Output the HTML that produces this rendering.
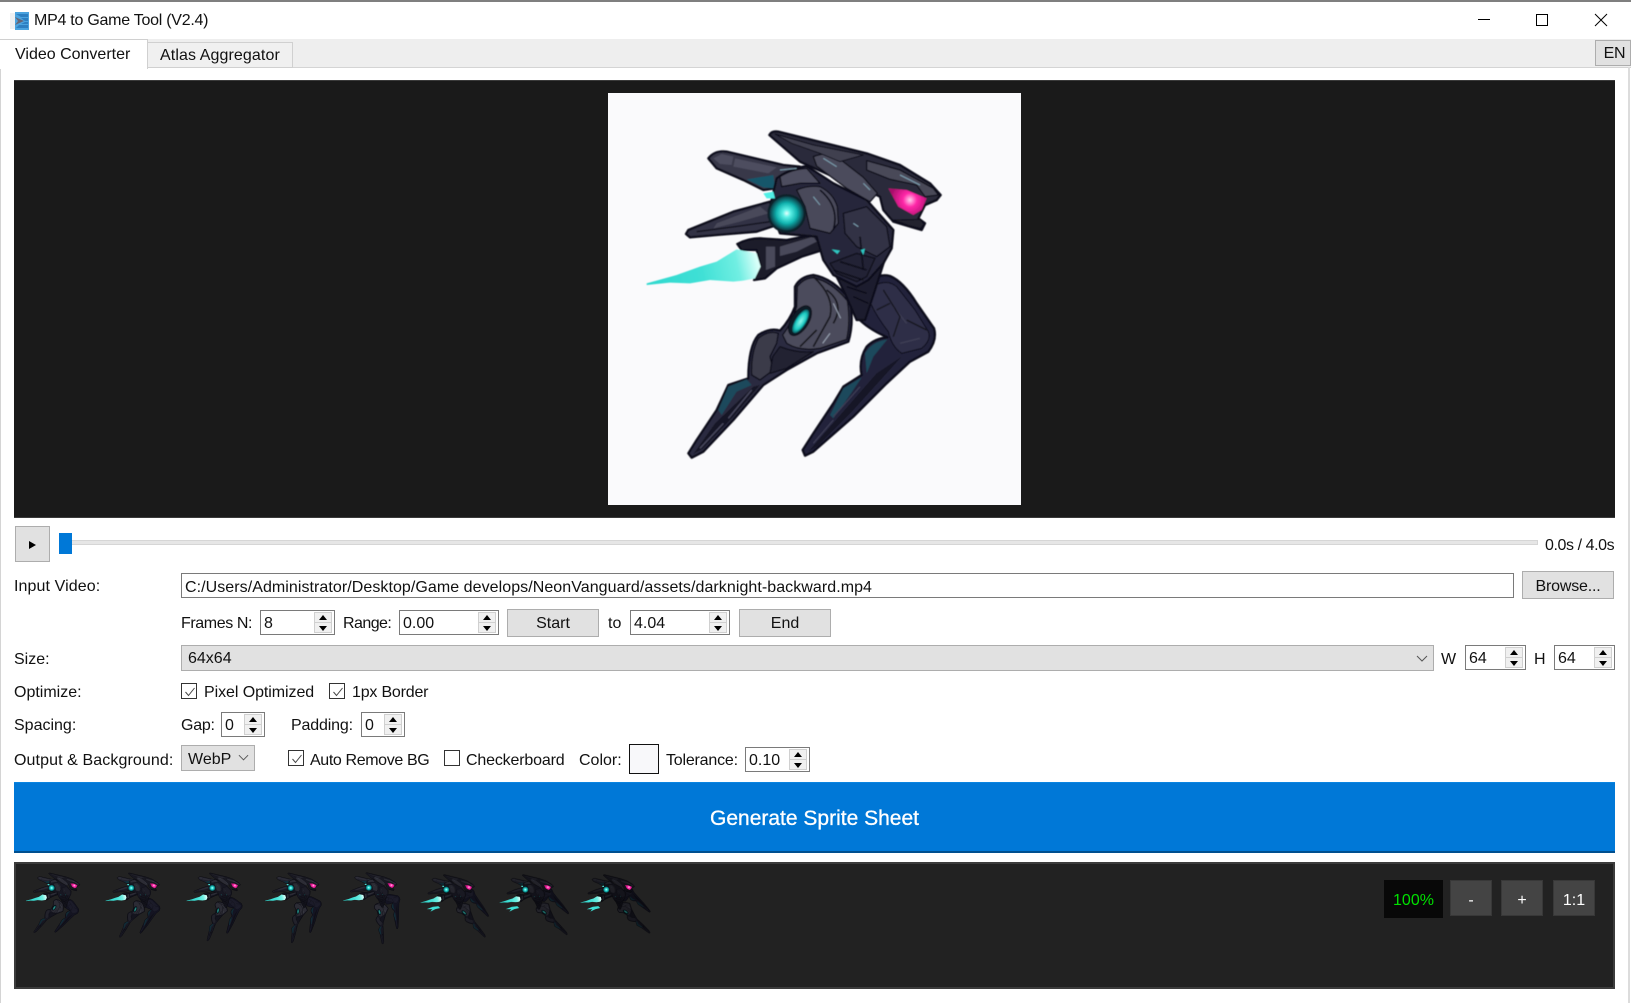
<!DOCTYPE html>
<html><head><meta charset="utf-8"><title>MP4 to Game Tool (V2.4)</title>
<style>
html,body{margin:0;padding:0;background:#fff}
body{width:1631px;height:1003px;position:relative;overflow:hidden;font-family:"Liberation Sans",sans-serif;font-size:16px;color:#111}
div,span,i,b{position:absolute;box-sizing:border-box;display:block;font-style:normal;font-weight:normal}
.t{height:22px;line-height:22px;white-space:nowrap}
.b{background:#e1e1e1;border:1px solid #adadad;text-align:center;white-space:nowrap}
.ed{background:#fff;border:1px solid #7a7a7a;white-space:nowrap;padding-left:3px;line-height:27px}
.spin{background:#fff;border:1px solid #7a7a7a;height:25px;line-height:26px;padding-left:3px;white-space:nowrap}
.spin i{right:2px;width:18px;height:11px;background:#f0f0f0;border:1px solid #d0d0d0}
.spin .u{top:1px}.spin .d{top:11px}
.spin i:after{content:"";position:absolute;left:4px;width:0;height:0;border-left:4px solid transparent;border-right:4px solid transparent}
.spin .u:after{top:2px;border-bottom:5px solid #000}
.spin .d:after{top:3px;border-top:5px solid #000}
.cb{width:16px;height:16px;background:#fff;border:1px solid #333}
.cb svg{position:absolute;left:1px;top:1px}
.zb{background:#444;border:1px solid #383838;color:#fff;text-align:center;line-height:40px;height:36px;width:42px;top:880px}
</style></head>
<body>
<div style="left:0;top:0;width:1631px;height:2px;background:#7f7f7f"></div>

<svg style="position:absolute;left:10px;top:12px" width="20" height="18" viewBox="0 0 20 18">
<rect x="0" y="1" width="6" height="16" fill="#eef0f2"/><rect x="5" y="0" width="14" height="18" fill="#4aa3df"/>
<path d="M6 2 L18 2 L18 5 L11 5Z M11 6 L18 6 L18 9 L15 9Z M15 10 L18 10 L18 12 L11 12Z M9 13 L18 13 L18 16 L6 16Z" fill="#2d7fc1"/>
<path d="M5 5 L14 9 L5 13 L8 9Z" fill="#667"/></svg>
<div class="t" style="left:34px;top:10px;letter-spacing:-.26px">MP4 to Game Tool (V2.4)</div>

<svg style="position:absolute;left:1470px;top:8px" width="150" height="24" viewBox="0 0 150 24" fill="none" stroke="#000" stroke-width="1">
<path d="M8 11.5H20"/><rect x="66.5" y="6.5" width="11" height="11"/><path d="M125 6L137 18M137 6L125 18"/></svg>

<div style="left:0;top:39px;width:1631px;height:28px;background:#eeeeee"></div>
<div style="left:0;top:67px;width:1631px;height:936px;background:#fff;border:1px solid #d4d4d4;border-right:0;border-bottom:0"></div>
<div style="left:1628px;top:67px;width:2px;height:936px;background:#dcdcdc"></div>
<div style="left:147px;top:42px;width:146px;height:26px;background:#f0f0f0;border:1px solid #d0d0d0;border-left:0"></div>
<div style="left:0;top:39px;width:148px;height:30px;background:#fff;border:1px solid #d0d0d0;border-bottom:0;border-left:0"></div>
<div class="t" style="left:15px;top:44px">Video Converter</div>
<div class="t" style="left:160px;top:45px;letter-spacing:.1px">Atlas Aggregator</div>
<div class="b" style="left:1595px;top:40px;width:36px;height:26px;line-height:25px;padding-left:3px;letter-spacing:-.3px">EN</div>

<div style="left:14px;top:80px;width:1601px;height:438px;background:#1a1a1a;border-top:1px solid #3a3a3a;border-bottom:1px solid #3a3a3a"></div>
<div style="left:608px;top:93px;width:413px;height:412px;background:#fafafc"></div>

<svg style="position:absolute;left:600px;top:90px" width="440" height="420" viewBox="0 0 1320 1260">
<defs>
<filter id="soft" x="-5%" y="-5%" width="110%" height="110%"><feGaussianBlur stdDeviation="1.2"/></filter>
<radialGradient id="orb"><stop offset="0" stop-color="#eafffd"/><stop offset=".22" stop-color="#5ff2e8"/><stop offset=".6" stop-color="#12b4b0"/><stop offset="1" stop-color="#0a3a44"/></radialGradient>
<radialGradient id="eye" gradientUnits="userSpaceOnUse" cx="930" cy="330" r="60"><stop offset="0" stop-color="#ffd0ee"/><stop offset=".35" stop-color="#ff28a8"/><stop offset="1" stop-color="#a80d6a"/></radialGradient>
<linearGradient id="fl" x1="470" y1="510" x2="140" y2="585" gradientUnits="userSpaceOnUse"><stop offset="0" stop-color="#d8fff9"/><stop offset=".18" stop-color="#70eee2"/><stop offset=".5" stop-color="#40e0d6"/><stop offset="1" stop-color="#2ed8ce"/></linearGradient>
<radialGradient id="kn"><stop offset="0" stop-color="#8ff7ec"/><stop offset=".7" stop-color="#18c9c0"/><stop offset="1" stop-color="#0d5f66"/></radialGradient>

<g id="legs" stroke="#10101a" stroke-width="7" stroke-linejoin="round">
<path fill="#22223a" d="M805,575 Q835,550 870,558 Q910,575 950,640 L1002,715 Q1012,750 985,785 L930,815 L860,880 L760,980 L640,1085 L615,1097 L608,1080 L640,1030 L700,940 L730,890 L785,855 Q775,810 800,770 Q825,745 862,742 Q800,715 770,680Z"/>
<path fill="#2f2f46" stroke-width="3" d="M818,590 Q860,565 890,590 L945,660 L985,725 Q995,750 965,775 L905,790 Q875,770 865,725 Q830,680 812,640Z"/>
<path fill="#1d4a5c" stroke="none" d="M795,790 Q815,755 862,748 L820,800 L800,850Z M730,895 L785,862 L750,915 L700,985 L690,975Z"/>
<path fill="#191926" stroke="none" d="M830,850 L905,800 L760,960 L650,1070 L625,1085Z"/>
<path fill="none" stroke="#3d3d55" stroke-width="4" d="M700,980 L780,890 M640,1060 L700,990 M880,650 L920,700 M900,760 L960,745"/>
<path fill="none" stroke="#12121c" stroke-width="4" d="M850,600 L900,680 L880,740 M920,690 L980,720 M830,660 L870,640"/>
<path fill="#2c2c40" d="M585,590 Q600,560 640,555 Q700,565 750,630 Q762,700 745,755 L650,790 L560,840 L490,885 L400,990 L310,1085 L275,1103 L265,1090 L290,1050 L350,960 L385,885 L445,865 Q445,770 475,735 Q510,712 540,722 Q570,690 585,650Z"/>
<path fill="#4b4b5b" stroke-width="4" d="M592,590 Q610,565 640,563 Q695,575 742,632 Q752,695 740,748 L660,775 Q600,785 560,760 L548,735 Q575,700 590,650Z"/>
<path fill="#3a3a4a" stroke-width="4" d="M475,745 Q505,720 535,730 L530,760 L510,800 L520,840 L480,870 L455,855 Q452,790 475,745Z"/>
<path fill="#232333" stroke-width="4" d="M540,770 Q590,790 640,785 L560,835 L510,850 L518,800Z"/>
<path fill="#1e4a5c" stroke="none" d="M385,890 L440,868 L455,885 L410,905 L365,975 L355,960Z"/>
<path fill="#191926" stroke="none" d="M460,890 L480,885 L400,980 L310,1075 L280,1092 L345,1000Z"/>
<path fill="none" stroke="#4a4a60" stroke-width="4" d="M385,985 L455,900 M300,1075 L370,1000"/>
<path fill="none" stroke="#12121c" stroke-width="5" d="M680,600 Q735,640 700,700 M640,560 Q705,620 690,680 L640,770 M600,770 L650,720"/>
<path fill="none" stroke="#9aa4b4" stroke-width="3" d="M700,640 L722,685 M668,760 L690,730"/>
<ellipse cx="600" cy="692" rx="50" ry="26" transform="rotate(-58 600 692)" fill="#101a28" stroke-width="3"/>
<ellipse cx="602" cy="694" rx="40" ry="16" transform="rotate(-58 602 694)" fill="url(#kn)" stroke="none"/>
</g>

<g id="top" stroke="#10101a" stroke-width="7" stroke-linejoin="round">
<path fill="#38384a" d="M325,205 Q345,180 380,185 L550,225 L600,230 L560,290 L490,300 L430,270 L350,235Z"/>
<path fill="#4d4d5e" stroke="none" d="M340,205 L365,192 L400,200 L395,225 L360,222Z M405,205 L530,232 L505,250 L400,230Z"/>
<path fill="#17566a" stroke="none" d="M440,268 L520,255 L525,295 L490,292Z"/>
<path fill="#333345" d="M258,432 L265,420 L400,365 L510,335 L530,405 L470,425 L350,435 L270,442Z"/>
<path fill="#4a4a5a" stroke="none" d="M350,400 L480,350 L505,370 L420,395 L340,415Z"/>
<path fill="none" stroke-width="4" d="M290,425 L420,408 L510,395"/>
<path fill="#1c1c2c" d="M412,462 Q445,445 480,445 L560,450 L660,430 L700,470 L605,500 L530,535 L495,565 L462,570 L482,525 L470,480 L425,480Z"/>
<path fill="#4a4a5a" stroke="none" d="M498,470 L525,470 L525,530 L498,540Z M540,470 L640,440 L650,455 L590,485 L540,498Z"/>
<path fill="#1f1f2e" d="M680,500 L860,490 L825,600 L795,690 L770,690 L735,610Z"/>
<path fill="#28283a" d="M530,265 Q570,235 620,228 L700,280 L800,330 L880,420 L875,475 L850,520 L805,570 L770,590 L700,555 L670,510 L650,440 L540,430 L510,350Z"/>
<path fill="#4e4e5e" stroke-width="4" d="M540,260 Q575,238 620,235 L660,280 L600,280 L545,290Z"/>
<path fill="#4a4a5a" stroke-width="4" d="M590,300 Q625,285 660,290 Q700,310 712,350 L715,400 L690,430 L630,415 L615,350Z"/>
<path fill="#323244" stroke-width="4" d="M730,370 L800,350 L860,410 L870,470 L830,500 L770,470 L735,430Z"/>
<path fill="#242434" stroke-width="4" d="M690,520 L770,490 L825,505 L800,560 L770,575 L710,550Z"/>
<path fill="none" stroke-width="5" d="M700,540 L790,570 M720,515 L800,540 M780,440 L790,540 M660,300 Q720,350 700,420 M740,590 L800,610 M760,620 L805,640"/>
<path fill="#2b2b3a" d="M508,135 Q515,122 535,125 L800,190 L900,225 L990,280 L1022,315 L1010,330 L975,345 L955,385 L975,400 L965,420 L930,410 L880,395 L850,360 L840,320 L800,300 L700,260 L600,215Z"/>
<path fill="#4c4c5c" stroke-width="4" d="M640,200 Q670,188 700,192 L790,262 L832,310 L810,335 L740,295 L650,228Z"/>
<path fill="#494959" stroke-width="4" d="M800,212 L900,240 L1000,295 L1015,315 L975,320 L950,285 L870,268 L800,240Z"/>
<path fill="#3f3f50" stroke-width="3" d="M525,132 L640,165 L790,195 L720,215 L660,190 L575,160Z"/>
<path fill="#20202e" stroke-width="3" d="M880,390 L960,388 L972,402 L962,416 L925,406Z"/>
<path fill="none" stroke-width="3" stroke="#7d9fb0" d="M790,280 L810,300 M900,255 L960,285 M670,205 L710,230 M760,400 L775,410 M640,320 L660,345 M540,240 L590,235"/>
<path fill="#2fc7c4" stroke="none" d="M695,478 L720,482 L712,492Z M782,480 L795,476 L790,495Z"/>
<circle cx="560" cy="370" r="58" fill="#10202c" stroke="none"/>
</g>

<g id="glow">
<path fill="url(#fl)" d="M140,580 L230,555 L300,530 L350,515 L410,478 L470,490 L482,530 L465,565 L430,572 L400,575 L330,570 L270,580 L210,578 L140,585Z"/>
<circle cx="560" cy="370" r="51" fill="url(#orb)"/>
<path fill="#4ff0e6" d="M490,310 L520,305 L525,325 L500,325Z"/>
<path fill="url(#eye)" d="M865,295 L920,300 L980,325 L965,360 L940,375 L895,350Z"/>
</g>
<path id="prong" fill="#3fe2d8" d="M240,690 L340,650 L430,640 L460,670 L380,690 L300,730 L330,690Z"/>
</defs>
<g filter="url(#soft)"><use href="#legs"/><use href="#top"/><use href="#glow"/></g>
</svg>

<div class="b" style="left:15px;top:526px;width:35px;height:36px"></div>
<div style="left:29px;top:541px;width:0;height:0;border-left:7px solid #000;border-top:4px solid transparent;border-bottom:4px solid transparent"></div>
<div style="left:60px;top:540px;width:1478px;height:5px;background:#e6e6e6;border:1px solid #d6d6d6"></div>
<div style="left:59px;top:533px;width:13px;height:21px;background:#0078d7"></div>
<div class="t" style="left:1545px;top:535px;letter-spacing:-.42px">0.0s / 4.0s</div>

<div class="t" style="left:14px;top:576px;letter-spacing:.1px">Input Video:</div>
<div class="ed" style="left:181px;top:573px;width:1333px;height:25px;letter-spacing:.06px">C:/Users/Administrator/Desktop/Game develops/NeonVanguard/assets/darknight-backward.mp4</div>
<div class="b" style="left:1522px;top:571px;width:92px;height:28px;line-height:30px;letter-spacing:-.2px">Browse...</div>

<div class="t" style="left:181px;top:613px;letter-spacing:-.4px">Frames N:</div>
<div class="spin" style="left:260px;top:610px;width:75px">8<i class="u"></i><i class="d"></i></div>
<div class="t" style="left:343px;top:613px;letter-spacing:-.55px">Range:</div>
<div class="spin" style="left:399px;top:610px;width:100px">0.00<i class="u"></i><i class="d"></i></div>
<div class="b" style="left:507px;top:609px;width:92px;height:28px;line-height:27px">Start</div>
<div class="t" style="left:608px;top:613px">to</div>
<div class="spin" style="left:630px;top:610px;width:100px">4.04<i class="u"></i><i class="d"></i></div>
<div class="b" style="left:739px;top:609px;width:92px;height:28px;line-height:27px">End</div>

<div class="t" style="left:14px;top:649px">Size:</div>
<div class="b" style="left:181px;top:645px;width:1253px;height:26px;line-height:26px;text-align:left;padding-left:6px">64x64</div>
<svg style="position:absolute;left:1416px;top:655px" width="12" height="7" viewBox="0 0 12 7" fill="none" stroke="#555"><path d="M1 1L6 6L11 1"/></svg>
<div class="t" style="left:1441px;top:649px">W</div>
<div class="spin" style="left:1465px;top:645px;width:61px">64<i class="u"></i><i class="d"></i></div>
<div class="t" style="left:1534px;top:649px">H</div>
<div class="spin" style="left:1554px;top:645px;width:61px">64<i class="u"></i><i class="d"></i></div>

<div class="t" style="left:14px;top:682px">Optimize:</div>
<div class="cb" style="left:181px;top:683px"><svg width="14" height="14" viewBox="0 0 14 14" fill="none" stroke="#444"><path d="M2.5 7L5.5 10.5L11.5 3"/></svg></div>
<div class="t" style="left:204px;top:682px;letter-spacing:-.07px">Pixel Optimized</div>
<div class="cb" style="left:329px;top:683px"><svg width="14" height="14" viewBox="0 0 14 14" fill="none" stroke="#444"><path d="M2.5 7L5.5 10.5L11.5 3"/></svg></div>
<div class="t" style="left:352px;top:682px;letter-spacing:-.2px">1px Border</div>

<div class="t" style="left:14px;top:715px">Spacing:</div>
<div class="t" style="left:181px;top:715px;letter-spacing:-.25px">Gap:</div>
<div class="spin" style="left:221px;top:712px;width:44px">0<i class="u"></i><i class="d"></i></div>
<div class="t" style="left:291px;top:715px;letter-spacing:-.15px">Padding:</div>
<div class="spin" style="left:361px;top:712px;width:44px">0<i class="u"></i><i class="d"></i></div>

<div class="t" style="left:14px;top:750px;letter-spacing:.1px">Output &amp; Background:</div>
<div class="b" style="left:181px;top:745px;width:74px;height:26px;line-height:27px;text-align:left;padding-left:6px">WebP</div>
<svg style="position:absolute;left:238px;top:754px" width="11" height="7" viewBox="0 0 12 7" fill="none" stroke="#555"><path d="M1 1L6 6L11 1"/></svg>
<div class="cb" style="left:288px;top:750px"><svg width="14" height="14" viewBox="0 0 14 14" fill="none" stroke="#444"><path d="M2.5 7L5.5 10.5L11.5 3"/></svg></div>
<div class="t" style="left:310px;top:750px;letter-spacing:-.37px">Auto Remove BG</div>
<div class="cb" style="left:444px;top:750px"></div>
<div class="t" style="left:466px;top:750px;letter-spacing:-.17px">Checkerboard</div>
<div class="t" style="left:579px;top:750px">Color:</div>
<div style="left:629px;top:744px;width:30px;height:30px;background:#f8f8fa;border:1px solid #111"></div>
<div class="t" style="left:666px;top:750px;letter-spacing:-.2px">Tolerance:</div>
<div class="spin" style="left:745px;top:747px;width:65px">0.10<i class="u"></i><i class="d"></i></div>

<div style="left:14px;top:782px;width:1601px;height:71px;background:#0078d7;border-top:1px solid #0a84e0;border-bottom:2px solid #004f8f;color:#fff;text-align:center;line-height:72px;font-size:21px;-webkit-text-stroke:.3px #fff">Generate Sprite Sheet</div>

<div style="left:14px;top:862px;width:1601px;height:127px;background:#222;border:2px solid #3c3c3c"></div>
<svg style="position:absolute;left:14px;top:862px" width="640" height="90" viewBox="14 862 640 90">
<g transform="translate(17.4 865.3) scale(.0612)"><g style="filter:brightness(.58)"><use href="#legs"/><use href="#top"/></g><use href="#glow"/></g>
<g transform="translate(97 865.3) scale(.0612)"><g style="filter:brightness(.58)"><use href="#legs" transform="rotate(-10 760 570)"/><use href="#top"/></g><use href="#glow"/></g>
<g transform="translate(178 865.3) scale(.0612)"><g style="filter:brightness(.58)"><use href="#legs" transform="rotate(-20 760 570)"/><use href="#top"/></g><use href="#glow"/></g>
<g transform="translate(256.5 865.3) scale(.0612)"><g style="filter:brightness(.58)"><use href="#legs" transform="rotate(-28 760 570)"/><use href="#top"/></g><use href="#glow"/></g>
<g transform="translate(334.5 865) scale(.0612)"><g style="filter:brightness(.58)"><use href="#legs" transform="rotate(-45 760 570)"/><use href="#top"/></g><use href="#glow"/></g>
<g transform="translate(412 867) scale(.0612)"><g style="filter:brightness(.5)"><use href="#legs" transform="rotate(-80 760 570)"/><use href="#top"/></g><use href="#glow"/><use href="#prong"/></g>
<g transform="translate(491 867) scale(.0612)"><g style="filter:brightness(.45)"><use href="#legs" transform="rotate(-85 760 570)"/><use href="#top"/></g><use href="#glow"/><use href="#prong"/></g>
<g transform="translate(572 867) scale(.0612)"><g style="filter:brightness(.4)"><use href="#legs" transform="rotate(-88 760 570)"/><use href="#top"/></g><use href="#glow"/><use href="#prong"/></g>
</svg>
<div style="left:1384px;top:880px;width:59px;height:38px;background:#080808;color:#00e000;text-align:center;line-height:42px">100%</div>
<div class="zb" style="left:1450px">-</div>
<div class="zb" style="left:1501px">+</div>
<div class="zb" style="left:1553px">1:1</div>
</body></html>
